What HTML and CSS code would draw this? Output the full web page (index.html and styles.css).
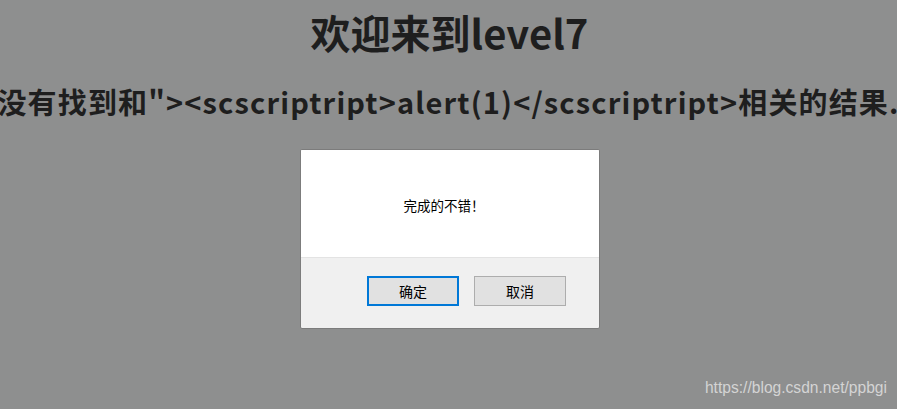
FILE: index.html
```html
<!DOCTYPE html>
<html lang="zh">
<head>
<meta charset="utf-8">
<title>level7</title>
<link rel="stylesheet" href="styles.css">
</head>
<body>
<div class="page">
  <h1 class="title">欢迎来到level7</h1>
  <div class="result-row">
    <h2 class="result">没有找到和"&gt;&lt;scscriptript&gt;alert(1)&lt;/scscriptript&gt;相关的结果.</h2>
  </div>
</div>
<div class="dialog">
  <div class="dialog-body">完成的不错！</div>
  <div class="dialog-footer">
    <button class="btn btn-ok">确定</button>
    <button class="btn btn-cancel">取消</button>
  </div>
</div>
<div class="watermark">https://blog.csdn.net/ppbgi</div>
</body>
</html>
```
FILE: styles.css
```css
html, body {
  margin: 0;
  padding: 0;
}
body {
  width: 897px;
  height: 409px;
  overflow: hidden;
  background: #8e8f8f;
  position: relative;
  font-family: "Noto Sans CJK SC", "Noto Sans", sans-serif;
  color: #1e1e1e;
}
.page {
  display: flex;
  flex-direction: column;
  align-items: center;
}
.title {
  margin: 8px 0 0 0;
  font-size: 40px;
  line-height: 48px;
  font-weight: bold;
  padding-left: 2px;
}
.result-row {
  width: 897px;
  display: flex;
  justify-content: center;
  margin-top: 27px;
}
.result {
  flex: none;
  margin: 0;
  white-space: nowrap;
  font-size: 29px;
  line-height: 36px;
  letter-spacing: 1.15px;
  font-weight: bold;
}
.dialog {
  position: absolute;
  left: 300px;
  top: 149px;
  width: 298px;
  height: 178px;
  border: 1px solid #7c7c7c;
  border-radius: 2px;
  background: #f0f0f0;
  display: flex;
  flex-direction: column;
  overflow: hidden;
}
.dialog-body {
  height: 108px;
  background: #ffffff;
  border-bottom: 1px solid #e3e3e3;
  display: flex;
  align-items: center;
  justify-content: center;
  font-size: 13.5px;
  color: #000;
  font-family: "Noto Sans CJK SC", sans-serif;
  padding: 2px 12px 0 0;
  box-sizing: border-box;
}
.dialog-footer {
  display: flex;
  gap: 15px;
  padding: 18px 0 0 66px;
}
.btn {
  width: 92px;
  height: 30px;
  box-sizing: border-box;
  background: #e1e1e1;
  font-family: "Noto Sans CJK SC", sans-serif;
  font-size: 14px;
  color: #000;
  padding: 0;
  margin: 0;
  border-radius: 0;
}
.btn-ok {
  border: 2px solid #0078d7;
}
.btn-cancel {
  border: 1px solid #adadad;
}
.watermark {
  position: absolute;
  right: 10px;
  top: 379px;
  font-family: "Liberation Sans", Arial, sans-serif;
  font-size: 15.6px;
  color: #d4d4d4;
}
```
